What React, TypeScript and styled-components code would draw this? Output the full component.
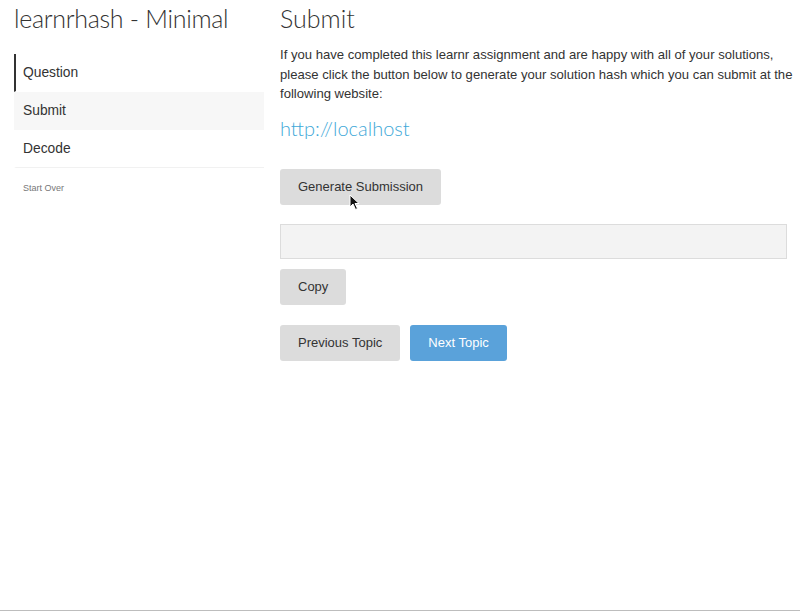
import React from "react";
import styled, { createGlobalStyle } from "styled-components";

const GlobalStyle = createGlobalStyle`
    html, body {
        margin: 0;
        padding: 0;
        background: #fff;
        font-family: "Liberation Sans", Arial, sans-serif;
        color: #333;
    }
`;

const App: React.FC = () => {
    return (
        <>
            <GlobalStyle />
            <Page>
                <Sidebar>
                    <Title>learnrhash - Minimal</Title>
                    <TopicList>
                        <Topic active>Question</Topic>
                        <Topic current>Submit</Topic>
                        <Topic last>Decode</Topic>
                    </TopicList>
                    <StartOver>Start Over</StartOver>
                </Sidebar>
                <Main>
                    <Heading>Submit</Heading>
                    <Text>
                        If you have completed this learnr assignment and are happy with all of
                        your solutions, please click the button below to generate your solution
                        hash which you can submit at the following website:
                    </Text>
                    <Link href="#">http://localhost</Link>
                    <ButtonWrap>
                        <Button>Generate Submission</Button>
                        <Cursor width="12" height="17" viewBox="0 0 12 17">
                            <path
                                d="M1 1 L1 13 L4 10 L6.5 15.5 L8.5 14.5 L6 9.5 L10 9.5 Z"
                                fill="#111"
                                stroke="#fff"
                                strokeWidth="1"
                            />
                        </Cursor>
                    </ButtonWrap>
                    <HashBox />
                    <Button>Copy</Button>
                    <NavRow>
                        <Button>Previous Topic</Button>
                        <Button primary>Next Topic</Button>
                    </NavRow>
                </Main>
            </Page>
            <BottomLine />
        </>
    );
};

export default App;

const Page = styled.div`
    display: flex;
    gap: 16px;
    padding: 0 13px 0 14px;
    height: 610px;
    box-sizing: border-box;
`;

const Sidebar = styled.div`
    width: 250px;
    flex-shrink: 0;
`;

const Title = styled.h1`
    margin: 0;
    padding-top: 3px;
    font-family: "Lato", sans-serif;
    font-weight: 300;
    font-size: 25px;
    letter-spacing: -0.3px;
    line-height: 30px;
    color: #333;
    white-space: nowrap;
`;

const TopicList = styled.div`
    margin-top: 21px;
    display: flex;
    flex-direction: column;
`;

const Topic = styled.div<{ active?: boolean; current?: boolean; last?: boolean }>`
    height: 38px;
    display: flex;
    align-items: center;
    padding-left: 7px;
    font-size: 13.8px;
    color: #333;
    background: ${(p) => (p.current ? "#f7f7f7" : "#fff")};
    border-left: 2px solid ${(p) => (p.active ? "#333" : "transparent")};
    border-bottom: 1px solid ${(p) => (p.last ? "#f1f1f1" : "transparent")};
    box-sizing: border-box;
`;

const StartOver = styled.div`
    margin-top: 15px;
    padding-left: 9px;
    font-size: 9px;
    color: #777;
`;

const Main = styled.div`
    flex: 1;
    display: flex;
    flex-direction: column;
    align-items: flex-start;
`;

const Heading = styled.h2`
    margin: 0;
    padding-top: 3px;
    font-family: "Lato", sans-serif;
    font-weight: 300;
    font-size: 25px;
    line-height: 30px;
    color: #333;
`;

const Text = styled.p`
    margin: 12px -10px 0 0;
    font-size: 13.1px;
    line-height: 19.5px;
    color: #333;
`;

const Link = styled.a`
    margin-top: 12px;
    font-family: "Lato", sans-serif;
    font-weight: 300;
    font-size: 20px;
    line-height: 24px;
    color: #3ea8d8;
    text-decoration: none;
`;

const ButtonWrap = styled.div`
    position: relative;
    margin-top: 29px;
`;

const Button = styled.button<{ primary?: boolean }>`
    height: 36px;
    padding: 0 18px;
    border: none;
    border-radius: 3px;
    font-family: "Liberation Sans", Arial, sans-serif;
    font-size: 13px;
    background: ${(p) => (p.primary ? "#5aa2da" : "#dcdcdc")};
    color: ${(p) => (p.primary ? "#fff" : "#333")};
    cursor: pointer;
`;

const Cursor = styled.svg`
    position: absolute;
    left: 69px;
    top: 25px;
`;

const HashBox = styled.div`
    margin: 19px 0 10px;
    width: 100%;
    height: 35px;
    box-sizing: border-box;
    background: #f3f3f3;
    border: 1px solid #dcdcdc;
`;

const NavRow = styled.div`
    margin-top: 20px;
    display: flex;
    gap: 10px;
`;

const BottomLine = styled.div`
    height: 1px;
    background: #bdbdbd;
`;
